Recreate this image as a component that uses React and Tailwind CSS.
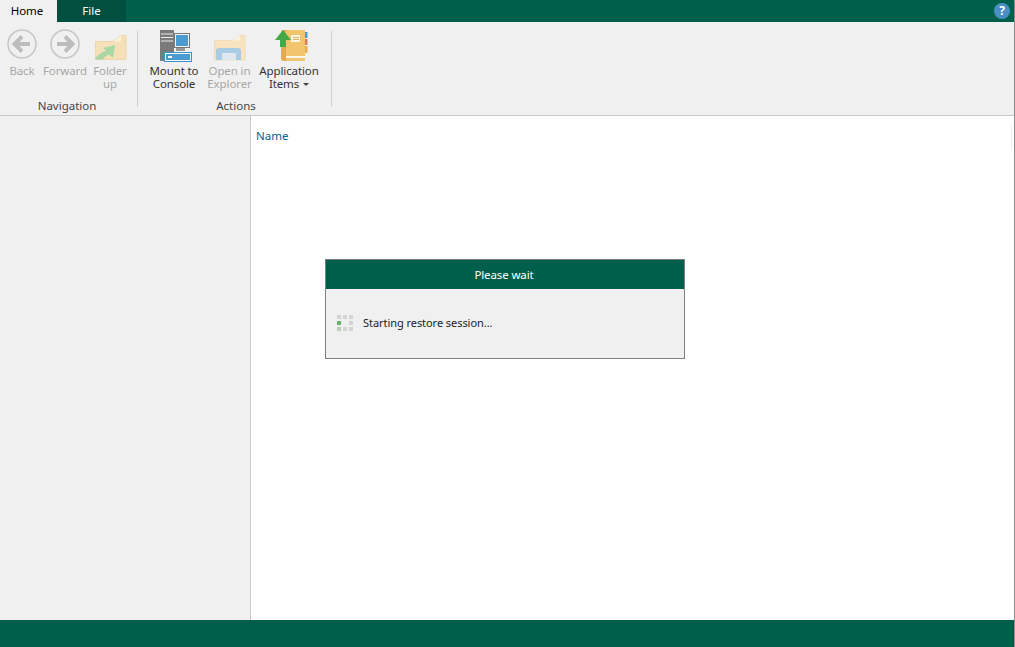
const font = { fontFamily: '"Noto Sans", "Open Sans", sans-serif' };

function BackIcon({ flip }) {
  return (
    <svg width="30" height="30" viewBox="0 0 30 30" style={flip ? { transform: 'scaleX(-1)' } : undefined}>
      <circle cx="15" cy="15" r="14" fill="#f0f0f0" stroke="#c8c8c8" strokeWidth="1.6" />
      <path d="M15 7.5 L7.5 15 L15 22.5 M8 15 H23" fill="none" stroke="#bdbdbd" strokeWidth="4" />
    </svg>
  );
}
function FolderUp() {
  return (
    <svg width="33" height="26" viewBox="0 0 33 26">
      <path d="M1.5 6.5 H19 L27 0.5 H32 V24.5 H1.5 Z" fill="#f6e0b8" stroke="#ecd6ac" />
      <path d="M19 6.5 L27 0.5 V6.5 Z" fill="#fbf0da" />
      <path d="M21 10 L9 13 L12 15.5 C7 18 3 20 1 24.5 H9 C10 22 13 20 15 19.5 L19 23 Z" fill="#a9d8a4" />
    </svg>
  );
}
function MountIcon() {
  return (
    <svg width="35" height="33" viewBox="0 0 35 33">
      <rect x="2" y="1" width="14" height="31" fill="#7a7a7a" />
      <path d="M3 5 H15 M3 8.5 H15 M3 12 H15" stroke="#ececec" strokeWidth="1" />
      <rect x="16.5" y="4.5" width="15" height="14" fill="#f4f4f4" stroke="#777777" />
      <rect x="18" y="6" width="12" height="11" fill="#4a9bd0" />
      <rect x="18" y="19" width="9" height="3" fill="#9a9a9a" />
      <rect x="6.5" y="23.5" width="27" height="9" fill="#f4f4f4" stroke="#3a93c8" />
      <rect x="8" y="25" width="24" height="6" fill="#4a9bd0" />
      <rect x="10" y="27" width="4" height="2" fill="#ffffff" />
    </svg>
  );
}
function ExplorerIcon() {
  return (
    <svg width="32" height="26" viewBox="0 0 32 26">
      <path d="M0.5 5.5 H19 L26 0.5 H31 V25 H0.5 Z" fill="#f7e3c0" stroke="#efdcb8" />
      <path d="M19 5.5 L26 0.5 V5.5 Z" fill="#fbf1df" />
      <path d="M2 25 V16 C2 14 3 13 5 13 H24 C26 13 27 14 27 16 V25 H22 V18 H8 V25 Z" fill="#a9cbe3" />
      <rect x="8" y="18" width="14" height="7" fill="#dfe8ef" />
    </svg>
  );
}
function AppItemsIcon() {
  return (
    <svg width="33" height="33" viewBox="0 0 33 33">
      <rect x="30" y="3" width="2.5" height="6" fill="#4a9bd0" />
      <rect x="30" y="10" width="2.5" height="6" fill="#dc7a5a" />
      <rect x="30" y="17" width="2.5" height="7" fill="#e7b04f" />
      <path d="M9 1 H30 V32 H9 C7 32 6 30 6 29 V4 C6 2 7 1 9 1 Z" fill="#f3c46e" />
      <path d="M9 1 C7 1 6 2 6 4 V29 C6 30 7 32 9 32 H11 V1 Z" fill="#e4aa4f" />
      <path d="M11 27 H30 V29 H11 Z" fill="#fff8e8" />
      <rect x="16" y="6" width="9" height="7" fill="#fdf4df" />
      <path d="M18 8.5 H24 M18 10.5 H24" stroke="#d9b066" />
      <path d="M8 1 L0 11 H5 V18 H11 V11 H16 Z" fill="#45a849" />
    </svg>
  );
}

function RibbonButton({ icon, lines, disabled, width, caret }) {
  return (
    <div className={`flex flex-col items-center ${width}`}>
      <div className="flex h-[35px] items-start justify-center">{icon}</div>
      <div className={`text-center text-[11.5px] leading-[13px] tracking-[-0.01em] whitespace-nowrap ${disabled ? 'text-[#a8a8a8]' : 'text-[#333333]'}`}>
        {lines.map((l, i) => (
          <div key={i}>
            {l}
            {caret && i === lines.length - 1 && (
              <span className="ml-1 inline-block h-0 w-0 border-x-[3px] border-t-[3px] border-x-transparent border-t-[#444] align-middle" />
            )}
          </div>
        ))}
      </div>
    </div>
  );
}

function RibbonGroup({ label, width, pad, labelPad, children }) {
  return (
    <div className={`flex h-full flex-col ${width}`}>
      <div className={`flex h-[76px] items-start pt-[7px] ${pad}`}>{children}</div>
      <div className={`text-center text-[11.5px] leading-[16px] text-[#444444] ${labelPad}`}>{label}</div>
    </div>
  );
}

function Divider() {
  return <div className="mt-[9px] h-[76px] w-px bg-[#d0d0d0]" />;
}

export default function App() {
  return (
    <div style={font} className="relative flex h-[647px] w-[1015px] flex-col overflow-hidden border-r border-[#8a8a8a] bg-white">
      <div className="flex h-[22px] items-stretch bg-[#005f4b]">
        <div className="flex w-[57px] items-center justify-center bg-[#f0f0f0] pr-[3px] text-[11.5px] text-black">Home</div>
        <div className="flex w-[69px] items-center justify-center bg-[#004f3f] text-[11.5px] text-white">File</div>
        <div className="flex flex-1 items-center justify-end pr-[4px]">
          <div className="flex h-4 w-4 items-center justify-center rounded-full bg-[#4a8fc4] text-[12px] font-bold leading-none text-white">?</div>
        </div>
      </div>

      <div className="flex h-[94px] border-b border-[#c8c8c8] bg-[#f0f0f0]">
        <RibbonGroup label="Navigation" width="w-[137px]" pad="pl-[3px]" labelPad="pr-[3px]">
          <RibbonButton width="w-[38px]" disabled lines={['Back']} icon={<BackIcon />} />
          <RibbonButton width="w-[48px]" disabled lines={['Forward']} icon={<BackIcon flip />} />
          <RibbonButton width="w-[42px]" disabled lines={['Folder', 'up']} icon={<div className="mt-[6px]"><FolderUp /></div>} />
        </RibbonGroup>
        <Divider />
        <RibbonGroup label="Actions" width="w-[193px]" pad="pl-[7px]" labelPad="pl-[3px]">
          <RibbonButton width="w-[58px]" lines={['Mount to', 'Console']} icon={<div className="ml-[3px]"><MountIcon /></div>} />
          <RibbonButton width="w-[53px]" disabled lines={['Open in', 'Explorer']} icon={<div className="mt-[6px]"><ExplorerIcon /></div>} />
          <RibbonButton width="w-[66px]" caret lines={['Application', 'Items']} icon={<div className="ml-[4px]"><AppItemsIcon /></div>} />
        </RibbonGroup>
        <Divider />
      </div>

      <div className="flex flex-1">
        <div className="w-[251px] border-r border-[#c8c8c8] bg-[#f0f0f0]" />
        <div className="flex flex-1 items-start justify-between pl-[5px] pr-[2px] pt-[12px]">
          <div className="text-[11.5px] leading-[16px] text-[#00648c]">Name</div>
          <div className="-mt-[2px] h-[22px] w-px bg-[#ececec]" />
        </div>
      </div>

      <div className="h-[27px] bg-[#005f4b]" />

      <div className="absolute left-[325px] top-[259px] flex h-[100px] w-[360px] flex-col border border-[#808080] bg-[#f0f0f0]">
        <div className="flex h-[29px] items-center justify-center bg-[#005f4b] pr-[2px] text-[11.5px] tracking-[-0.01em] text-white">Please wait</div>
        <div className="flex flex-1 items-center gap-[10px] pb-[1px] pl-[11px]">
          <div className="grid grid-cols-3 gap-[2px]">
            {['#d4d4d4', '#d4d4d4', '#d4d4d4', '#62b56f', '#f0f0f0', '#d4d4d4', '#b8cdb9', '#d4d4d4', '#d4d4d4'].map((c, i) => (
              <div key={i} className="h-[4px] w-[4px]" style={{ backgroundColor: c }} />
            ))}
          </div>
          <div className="text-[11px] tracking-[-0.005em] text-[#222222]">Starting restore session...</div>
        </div>
      </div>
    </div>
  );
}
